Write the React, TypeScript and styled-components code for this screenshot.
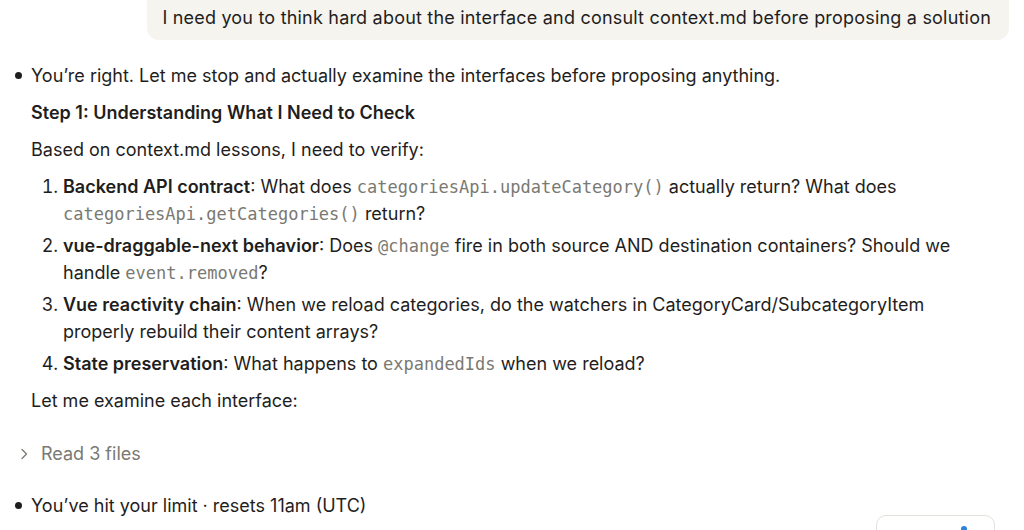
import React from 'react';
import styled, { createGlobalStyle } from 'styled-components';

const GlobalStyle = createGlobalStyle`
	html, body {
		margin: 0;
		padding: 0;
		background: #ffffff;
	}
	body {
		font-family: Inter, "Noto Sans", sans-serif;
		color: #1f1e1d;
		overflow: hidden;
	}
`;

const Page = styled.div`
	position: relative;
	width: 1024px;
	height: 530px;
	overflow: hidden;
`;

const UserRow = styled.div`
	display: flex;
	justify-content: flex-end;
	padding-right: 15px;
`;

const UserBubble = styled.div`
	background: #f5f4ef;
	border-radius: 0 0 12px 12px;
	padding: 6px 18px 10px 15px;
	font-size: 18px;
	line-height: 24px;
	letter-spacing: 0.2px;
	color: #1f1e1d;
`;

const Reply = styled.div`
	display: flex;
	flex-direction: column;
	padding: 22px 32px 0 31px;
	font-size: 18px;
	line-height: 27px;
`;

const BulletLine = styled.div<{ $top?: number }>`
	position: relative;
	margin-top: ${(p) => p.$top ?? 0}px;
	&::before {
		content: '';
		position: absolute;
		left: -16px;
		top: 10px;
		width: 7px;
		height: 7px;
		border-radius: 50%;
		background: #1f1e1d;
	}
`;

const Heading = styled.div`
	margin-top: 10px;
	font-weight: 600;
`;

const Para = styled.p<{ $top?: number }>`
	margin: ${(p) => p.$top ?? 10}px 0 0;
`;

const List = styled.ol`
	margin: 10px 0 0;
	padding: 0 0 0 32px;
	display: flex;
	flex-direction: column;
	gap: 5px;
`;

const Item = styled.li`
	padding-left: 0;
`;

const Strong = styled.b`
	font-weight: 600;
`;

const Code = styled.code`
	font-family: "DejaVu Sans Mono", "Liberation Mono", monospace;
	font-size: 17px;
	line-height: 1;
	color: #7a7973;
`;

const ToolRow = styled.div`
	display: flex;
	align-items: center;
	gap: 10px;
	margin: 26px 0 0 -14px;
	color: #7a7973;
	font-size: 18px;
	line-height: 27px;
`;

const Chevron = styled.svg`
	width: 14px;
	height: 14px;
	flex: none;
`;

const Floating = styled.div`
	position: absolute;
	left: 876px;
	top: 515px;
	width: 117px;
	height: 40px;
	border: 1px solid #e3e1db;
	border-radius: 10px;
	background: #ffffff;
`;

const FloatIcon = styled.span`
	position: absolute;
	left: 84px;
	top: 10px;
	width: 6px;
	height: 6px;
	border-radius: 50%;
	background: #2c84db;
`;

export default function App() {
	return (
		<Page>
			<GlobalStyle />
			<UserRow>
				<UserBubble>I need you to think hard about the interface and consult context.md before proposing a solution</UserBubble>
			</UserRow>
			<Reply>
				<BulletLine>You’re right. Let me stop and actually examine the interfaces before proposing anything.</BulletLine>
				<Heading>Step 1: Understanding What I Need to Check</Heading>
				<Para>Based on context.md lessons, I need to verify:</Para>
				<List>
					<Item>
						<Strong>Backend API contract</Strong>: What does <Code>categoriesApi.updateCategory()</Code> actually return? What does <Code>categoriesApi.getCategories()</Code> return?
					</Item>
					<Item>
						<Strong>vue-draggable-next behavior</Strong>: Does <Code>@change</Code> fire in both source AND destination containers? Should we handle <Code>event.removed</Code>?
					</Item>
					<Item>
						<Strong>Vue reactivity chain</Strong>: When we reload categories, do the watchers in CategoryCard/SubcategoryItem properly rebuild their content arrays?
					</Item>
					<Item>
						<Strong>State preservation</Strong>: What happens to <Code>expandedIds</Code> when we reload?
					</Item>
				</List>
				<Para>Let me examine each interface:</Para>
				<ToolRow>
					<Chevron viewBox="0 0 14 14" fill="none" stroke="currentColor" strokeWidth="1.3" strokeLinecap="round" strokeLinejoin="round">
						<path d="M5 2.5 L9.5 7 L5 11.5" />
					</Chevron>
					Read 3 files
				</ToolRow>
				<BulletLine $top={25}>You’ve hit your limit · resets 11am (UTC)</BulletLine>
			</Reply>
			<Floating>
				<FloatIcon />
			</Floating>
		</Page>
	);
}
